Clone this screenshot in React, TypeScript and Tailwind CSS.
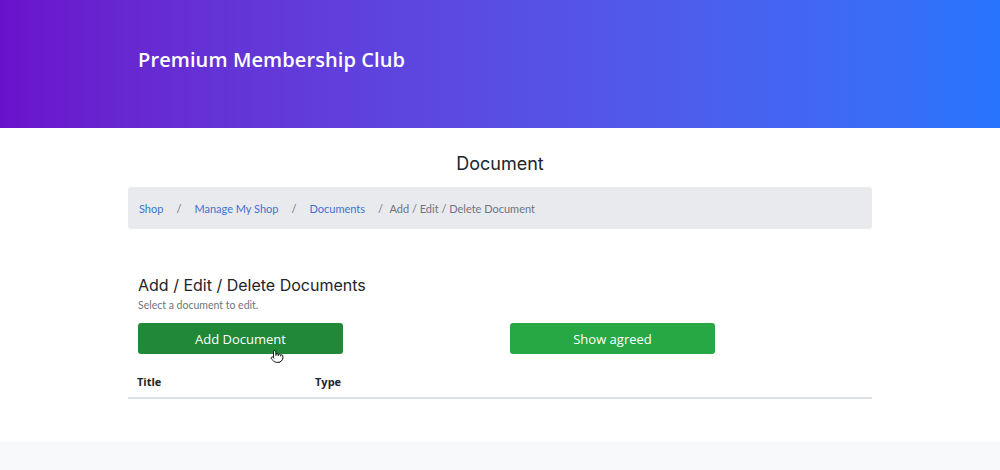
import React from "react";
import { Pointer } from "lucide-react";

const crumbs = ["Shop", "Manage My Shop", "Documents"];

export default function App() {
  return (
    <div className="min-h-[470px] bg-[#f8f9fa] font-['Open_Sans',sans-serif]">
      <header className="h-[128px] bg-gradient-to-r from-[#6a11cb] to-[#2575fc] flex items-center px-[138px] pb-[8px]">
        <h1 className="text-white text-[20px] font-semibold tracking-[0.1px]">Premium Membership Club</h1>
      </header>

      <main className="bg-white pb-[43px]">
        <div className="w-[744px] mx-auto">
          <h2 className="text-center text-[18px] text-[#212529] font-['Inter',sans-serif] pt-[22px] leading-[28px]">
            Document
          </h2>
          <nav className="mt-[9px] h-[42px] bg-[#e9eaee] rounded-[3px] flex items-center px-[11px] text-[11px] font-['Lato',sans-serif] pt-[2px]">
            {crumbs.map((c) => (
              <React.Fragment key={c}>
                <a className="text-[#3d72cf]">{c}</a>
                <span className="text-[#6c757d] px-[13px]">/</span>
              </React.Fragment>
            ))}
            <span className="text-[#6c757d] -ml-[9px]">&nbsp;Add / Edit / Delete Document</span>
          </nav>

          <section className="mt-[43px] px-[10px]">
            <h3 className="text-[16px] text-[#212529] font-['Inter',sans-serif] leading-[26px]">
              Add / Edit / Delete Documents
            </h3>
            <p className="text-[10.5px] text-[#6c757d] font-['Lato',sans-serif] leading-[14px]">
              Select a document to edit.
            </p>
          </section>

          <div className="grid grid-cols-2 mt-[11px]">
            <div className="px-[10px] relative">
              <button className="w-[205px] h-[31px] pt-[3px] rounded-[3px] bg-[#218838] text-white text-[13px]">
                Add Document
              </button>
              <Pointer className="absolute left-[142px] top-[26px] w-[14px] h-[15px] text-black fill-white" strokeWidth={1.5} />
            </div>
            <div className="px-[10px]">
              <button className="w-[205px] h-[31px] pt-[3px] rounded-[3px] bg-[#28a745] text-white text-[13px]">
                Show agreed
              </button>
            </div>
          </div>

          <table className="w-full mt-[14px] text-[11px] font-bold text-[#212529]">
            <thead>
              <tr className="border-b-2 border-[#dee2e6]">
                <th className="text-left w-[187px] pl-[9px] py-[6px]">Title</th>
                <th className="text-left py-[6px]">Type</th>
              </tr>
            </thead>
          </table>
        </div>
      </main>
    </div>
  );
}
